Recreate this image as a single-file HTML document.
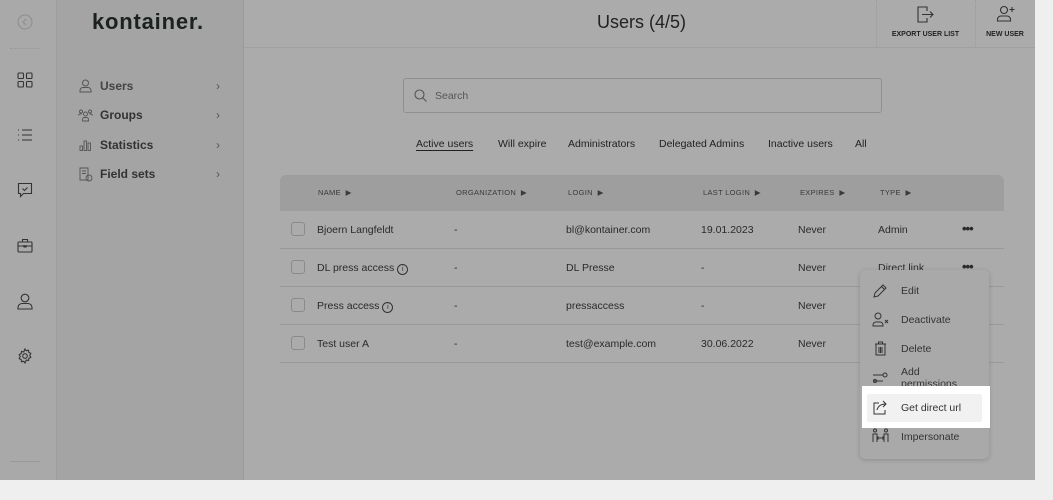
<!DOCTYPE html>
<html><head><meta charset="utf-8"><style>
*{box-sizing:border-box;margin:0;padding:0}
body{width:1053px;height:500px;background:#efefef;font-family:"Liberation Sans",sans-serif;color:#2a2a2a;position:relative;overflow:hidden}
.frame{position:absolute;left:0;top:0;width:1035px;height:480px;background:#ababab;overflow:hidden}
.rail{position:absolute;left:0;top:0;width:57px;height:480px;background:#a9a9a9;border-right:1px solid #9d9d9d}
.side{position:absolute;left:57px;top:0;width:187px;height:480px;background:#a4a4a4;border-right:1px solid #9a9a9a}
.hdr{position:absolute;left:244px;top:0;right:0;height:48px;border-bottom:1px solid #a0a0a0}
.abs{position:absolute}
.nav{position:absolute;left:100px;font-size:12px;font-weight:bold;color:#333}
.chev{position:absolute;left:216px;font-size:12px;color:#555}
.th{position:absolute;top:188px;font-size:7.5px;color:#3a3a3a;letter-spacing:.3px}
.row{position:absolute;left:280px;width:724px;height:38px;border-bottom:1px solid #999}
.c{position:absolute;top:13px;font-size:10.5px;color:#2a2a2a;white-space:nowrap}
.cb{position:absolute;left:11px;top:11px;width:14px;height:14px;border:1px solid #8a8a8a;border-radius:3px}
.dots{position:absolute;left:682px;top:11px;font-weight:bold;font-size:13px;letter-spacing:-1px;line-height:13px}
.mi{position:absolute;left:901px;font-size:10.5px;color:#333}
.inf{display:inline-block;width:11px;height:11px;border:1px solid #333;border-radius:50%;font-size:7px;text-align:center;line-height:9px;vertical-align:0px;margin-left:3px}
svg{position:absolute}
</style></head><body>
<div class="frame">
<div class="rail">
<svg style="left:17px;top:14px" width="16" height="16" viewBox="0 0 16 16"><circle cx="8" cy="8" r="7" fill="none" stroke="#8c8c8c"/><path d="M9 5L6 8l3 3" fill="none" stroke="#8c8c8c"/></svg>
<div class="abs" style="left:10px;top:48px;width:30px;border-top:1px dotted #999"></div>
<svg style="left:17px;top:72px" width="16" height="16" viewBox="0 0 16 16" fill="none" stroke="#333" stroke-width="1.1"><rect x="1" y="1" width="5.5" height="5.5" rx="1"/><rect x="9.5" y="1" width="5.5" height="5.5" rx="1"/><rect x="1" y="9.5" width="5.5" height="5.5" rx="1"/><rect x="9.5" y="9.5" width="5.5" height="5.5" rx="1"/></svg>
<svg style="left:17px;top:128px" width="16" height="14" viewBox="0 0 16 14" fill="none" stroke="#333" stroke-width="1.1"><path d="M5 2h10M5 7h10M5 12h10M1 2h1M1 7h1M1 12h1"/></svg>
<svg style="left:17px;top:182px" width="16" height="16" viewBox="0 0 16 16" fill="none" stroke="#333" stroke-width="1.1"><path d="M1.5 1.5h13v10h-8l-3 3v-3h-2z M5.5 6.5l2 2 3-3"/></svg>
<svg style="left:17px;top:238px" width="16" height="15" viewBox="0 0 16 15" fill="none" stroke="#333" stroke-width="1.1"><rect x="1" y="4" width="14" height="10" rx="1"/><path d="M5.5 4V1.5h5V4M1 8h14M7 7v2h2V7"/></svg>
<svg style="left:17px;top:293px" width="16" height="17" viewBox="0 0 16 17" fill="none" stroke="#333" stroke-width="1.1"><circle cx="8" cy="5" r="3.8"/><path d="M1 16v-1.5a4 4 0 0 1 4-4h6a4 4 0 0 1 4 4V16z"/></svg>
<svg style="left:17px;top:348px" width="16" height="16" viewBox="0 0 16 16" fill="none" stroke="#333" stroke-width="1.1"><circle cx="8" cy="8" r="2.3"/><path d="M8 1l1.3 1.8 2.2-.6.3 2.2 2 1-1 2 1 2-2 1-.3 2.2-2.2-.6L8 15l-1.3-1.8-2.2.6-.3-2.2-2-1 1-2-1-2 2-1 .3-2.2 2.2.6z"/></svg>
<div class="abs" style="left:10px;top:461px;width:30px;border-top:1px solid #999"></div>
</div>
<div class="side">
<div class="abs" style="left:35px;top:9px;font-size:22px;font-weight:bold;color:#1b211f;letter-spacing:.8px">kontainer.</div>
</div>
<svg style="left:79px;top:79px" width="13" height="14" viewBox="0 0 13 14" fill="none" stroke="#555"><circle cx="6.5" cy="4" r="3"/><path d="M1 13v-1.5a3 3 0 0 1 3-3h5a3 3 0 0 1 3 3V13z"/></svg>
<div class="nav" style="top:79px;color:#444">Users</div><div class="chev" style="top:79px">›</div>
<svg style="left:78px;top:109px" width="15" height="13" viewBox="0 0 15 13" fill="none" stroke="#555" stroke-width=".9"><circle cx="7.5" cy="5" r="2"/><circle cx="3" cy="2.5" r="1.5"/><circle cx="12" cy="2.5" r="1.5"/><path d="M4.5 12v-1.5a2 2 0 0 1 2-2h2a2 2 0 0 1 2 2V12zM0.5 6.5a2 2 0 0 1 2-1.5h1M14.5 6.5a2 2 0 0 0-2-1.5h-1"/></svg>
<div class="nav" style="top:108px">Groups</div><div class="chev" style="top:108px">›</div>
<svg style="left:79px;top:139px" width="13" height="12" viewBox="0 0 13 12" fill="none" stroke="#555" stroke-width=".9"><rect x="1" y="7" width="2.5" height="4.5"/><rect x="5" y="2" width="2.5" height="9.5"/><rect x="9" y="4" width="2.5" height="7.5"/></svg>
<div class="nav" style="top:138px">Statistics</div><div class="chev" style="top:138px">›</div>
<svg style="left:79px;top:167px" width="14" height="15" viewBox="0 0 14 15" fill="none" stroke="#555" stroke-width=".9"><path d="M1 1h8v12H1zM3 4h4M3 6.5h4"/><circle cx="10" cy="11" r="3"/></svg>
<div class="nav" style="top:167px">Field sets</div><div class="chev" style="top:167px">›</div>

<div class="hdr">
<div class="abs" style="left:0;width:795px;top:12px;text-align:center;font-size:18px;color:#222">Users (4/5)</div>
<div class="abs" style="left:632px;top:0;width:1px;height:48px;border-left:1px dotted #9a9a9a"></div>
<div class="abs" style="left:731px;top:0;width:1px;height:48px;border-left:1px dotted #9a9a9a"></div>
<svg style="left:672px;top:6px" width="18" height="17" viewBox="0 0 18 17" fill="none" stroke="#333" stroke-width="1.1"><path d="M11 5V1H2v15h9v-4M6 8.5h11M14 5.5l3 3-3 3"/></svg>
<div class="abs" style="left:632px;top:31px;width:99px;text-align:center;font-size:7px;font-weight:bold;color:#222">EXPORT USER LIST</div>
<svg style="left:752px;top:5px" width="20" height="17" viewBox="0 0 20 17" fill="none" stroke="#333" stroke-width="1.1"><circle cx="8" cy="5" r="3.5"/><path d="M1.5 16v-1.5a3.5 3.5 0 0 1 3.5-3.5h6a3.5 3.5 0 0 1 3.5 3.5V16zM16 2v5M13.5 4.5h5"/></svg>
<div class="abs" style="left:731px;top:31px;width:60px;text-align:center;font-size:7px;font-weight:bold;color:#222">NEW USER</div>
</div>

<div class="abs" style="left:403px;top:78px;width:479px;height:35px;border:1px solid #8f8f8f;border-radius:3px"></div>
<svg style="left:414px;top:89px" width="13" height="13" viewBox="0 0 13 13" fill="none" stroke="#555" stroke-width="1.1"><circle cx="5.5" cy="5.5" r="4.5"/><path d="M9 9l3.5 3.5"/></svg>
<div class="abs" style="left:435px;top:90px;font-size:10.5px;color:#555">Search</div>

<div class="abs" style="top:138px;left:416px;font-size:10.5px;color:#222;text-decoration:underline;text-underline-offset:3px">Active users</div>
<div class="abs" style="top:138px;left:498px;font-size:10.5px;color:#222">Will expire</div>
<div class="abs" style="top:138px;left:568px;font-size:10.5px;color:#222">Administrators</div>
<div class="abs" style="top:138px;left:659px;font-size:10.5px;color:#222">Delegated Admins</div>
<div class="abs" style="top:138px;left:768px;font-size:10.5px;color:#222">Inactive users</div>
<div class="abs" style="top:138px;left:855px;font-size:10.5px;color:#222">All</div>

<div class="abs" style="left:280px;top:175px;width:724px;height:36px;background:#9e9e9e;border-radius:6px 6px 0 0"></div>
<div class="th" style="left:318px">NAME &nbsp;▶</div>
<div class="th" style="left:456px">ORGANIZATION &nbsp;▶</div>
<div class="th" style="left:568px">LOGIN &nbsp;▶</div>
<div class="th" style="left:703px">LAST LOGIN &nbsp;▶</div>
<div class="th" style="left:800px">EXPIRES &nbsp;▶</div>
<div class="th" style="left:880px">TYPE &nbsp;▶</div>

<div class="row" style="top:211px"><div class="cb"></div><div class="c" style="left:37px">Bjoern Langfeldt</div><div class="c" style="left:174px">-</div><div class="c" style="left:286px">bl@kontainer.com</div><div class="c" style="left:421px">19.01.2023</div><div class="c" style="left:518px">Never</div><div class="c" style="left:598px">Admin</div><div class="dots">•••</div></div>
<div class="row" style="top:249px"><div class="cb"></div><div class="c" style="left:37px">DL press access<span class="inf">i</span></div><div class="c" style="left:174px">-</div><div class="c" style="left:286px">DL Presse</div><div class="c" style="left:421px">-</div><div class="c" style="left:518px">Never</div><div class="c" style="left:598px">Direct link</div><div class="dots">•••</div></div>
<div class="row" style="top:287px"><div class="cb"></div><div class="c" style="left:37px">Press access<span class="inf">i</span></div><div class="c" style="left:174px">-</div><div class="c" style="left:286px">pressaccess</div><div class="c" style="left:421px">-</div><div class="c" style="left:518px">Never</div></div>
<div class="row" style="top:325px"><div class="cb"></div><div class="c" style="left:37px">Test user A</div><div class="c" style="left:174px">-</div><div class="c" style="left:286px">test@example.com</div><div class="c" style="left:421px">30.06.2022</div><div class="c" style="left:518px">Never</div></div>

<div class="abs" style="left:860px;top:270px;width:129px;height:189px;background:#a9a9a9;border-radius:5px;box-shadow:0 1px 5px rgba(0,0,0,.18)"></div>
<svg style="left:873px;top:284px" width="14" height="14" viewBox="0 0 14 14" fill="none" stroke="#333" stroke-width="1"><path d="M1 13l1-4L10 1l3 3-8 8z M8.5 2.5l3 3"/></svg>
<div class="mi" style="top:285px">Edit</div>
<svg style="left:872px;top:312px" width="18" height="15" viewBox="0 0 18 15" fill="none" stroke="#333" stroke-width="1"><circle cx="6" cy="4" r="3"/><path d="M1 14v-1a3 3 0 0 1 3-3h4a3 3 0 0 1 3 3v1zM13 8l3 3M16 8l-3 3"/></svg>
<div class="mi" style="top:314px">Deactivate</div>
<svg style="left:874px;top:341px" width="13" height="15" viewBox="0 0 13 15" fill="none" stroke="#333" stroke-width="1"><path d="M1 3h11M4.5 3V1h4v2M2 3v11h9V3M5 6v6M6.5 6v6M8 6v6"/></svg>
<div class="mi" style="top:343px">Delete</div>
<svg style="left:872px;top:372px" width="16" height="12" viewBox="0 0 16 12" fill="none" stroke="#333" stroke-width="1"><path d="M1 3h10M1 9h10"/><circle cx="13" cy="3" r="2"/><circle cx="3" cy="9" r="1.5"/></svg>
<div class="mi" style="top:366px;line-height:12px">Add<br>permissions</div>
</div>
<div class="abs" style="left:862px;top:386px;width:128px;height:42px;background:#fff"></div>
<div class="abs" style="left:867px;top:394px;width:115px;height:28px;background:#f1f1f1;border-radius:2px"></div>
<svg style="left:873px;top:400px" width="16" height="15" viewBox="0 0 16 15" fill="none" stroke="#333" stroke-width="1"><path d="M6 3H1v11h11V10M4 10c1-4 4-6 9-6M10 1l3 3-3 3"/></svg>
<div class="mi" style="top:402px">Get direct url</div>
<svg style="left:872px;top:428px" width="17" height="16" viewBox="0 0 17 16" fill="none" stroke="#333" stroke-width="1"><circle cx="3" cy="2.5" r="1.5"/><circle cx="14" cy="2.5" r="1.5"/><path d="M1 14V6h4v8M12 14V6h4v8M5 10h7M6.5 8.5L5 10l1.5 1.5M10.5 8.5L12 10l-1.5 1.5"/></svg>
<div class="mi" style="top:431px">Impersonate</div>
</body></html>
